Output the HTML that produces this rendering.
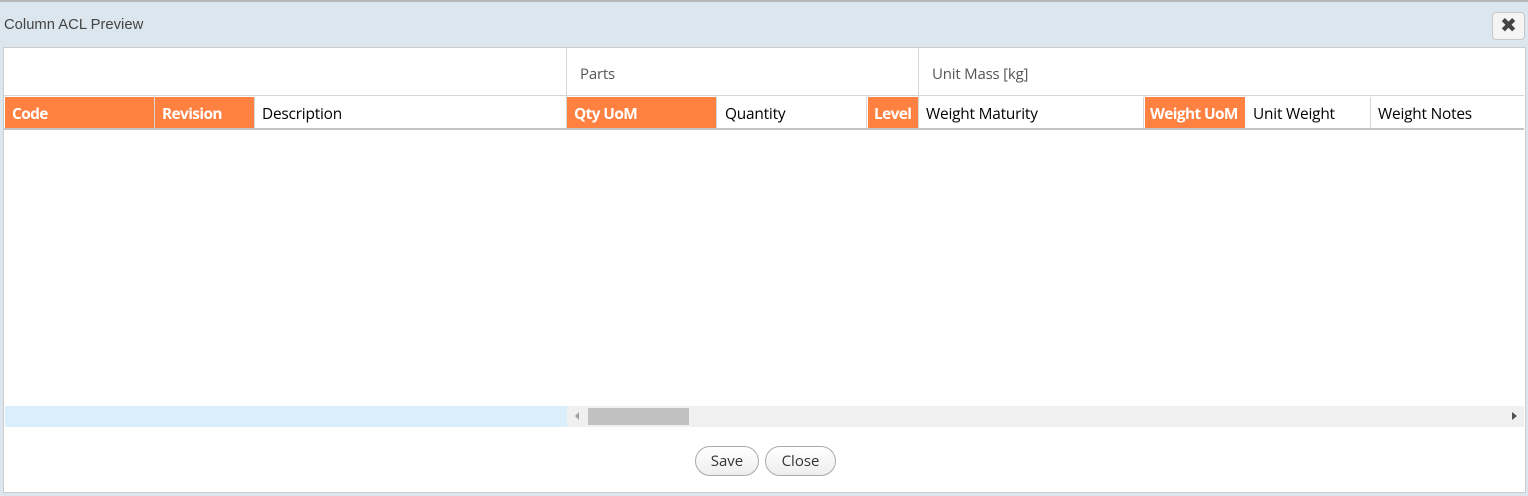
<!DOCTYPE html>
<html><head><style>
*{margin:0;padding:0;box-sizing:border-box}
body{width:1528px;height:496px;background:#dbe6ef;font-family:"Open Sans","DejaVu Sans","Liberation Sans",sans-serif;position:relative;overflow:hidden}
.a{position:absolute}
.top{left:0;top:0;width:1528px;height:2px;background:#b8b8b8}
.title{left:4px;top:17px;font-size:14.8px;color:#444;font-family:"Liberation Sans",sans-serif}
.xb{left:1492px;top:12px;width:33px;height:28px;background:#f4f4f4;border:1px solid #c8c8c8;border-radius:4px;text-align:center;font-size:20px;line-height:25px;font-weight:bold;color:#444;font-family:"DejaVu Sans",sans-serif}
.panel{left:3px;top:47px;width:1523px;height:446px;background:#fff;border:1px solid #ccc}
.c{top:97px;height:31px;font-size:15.4px;line-height:33px;padding-left:7px;color:#000;white-space:nowrap;letter-spacing:-0.2px}
.o{background:#ff8142;color:#fff;font-weight:bold;letter-spacing:-0.6px}
.vl{width:1px;background:#d6d6d6}
.g{top:64px;font-size:15px;color:#555;letter-spacing:-0.2px}
</style></head><body>
<div class="a top"></div>
<div class="a title">Column ACL Preview</div>
<div class="a xb">✖</div>
<div class="a panel"></div>
<div class="a" style="left:4px;top:95px;width:1520px;height:1px;background:#d6d6d6"></div>
<div class="a vl" style="left:566px;top:48px;height:80px"></div>
<div class="a vl" style="left:918px;top:48px;height:80px"></div>
<div class="a g" style="left:580px">Parts</div>
<div class="a g" style="left:932px">Unit Mass [kg]</div>
<div class="a c o" style="left:5px;width:149px">Code</div>
<div class="a c o" style="left:155px;width:99px">Revision</div>
<div class="a c" style="left:255px;width:311px">Description</div>
<div class="a c o" style="left:567px;width:149px">Qty UoM</div>
<div class="a vl" style="left:716px;top:97px;height:31px"></div>
<div class="a c" style="left:718px;width:148px">Quantity</div>
<div class="a vl" style="left:866px;top:97px;height:31px"></div>
<div class="a c o" style="left:868px;width:50px;padding-left:6px">Level</div>
<div class="a c" style="left:919px;width:225px">Weight Maturity</div>
<div class="a vl" style="left:1143px;top:97px;height:31px"></div>
<div class="a c o" style="left:1145px;width:100px;padding-left:5px">Weight UoM</div>
<div class="a c" style="left:1246px;width:124px">Unit Weight</div>
<div class="a vl" style="left:1370px;top:97px;height:31px"></div>
<div class="a c" style="left:1371px;width:150px">Weight Notes</div>
<div class="a vl" style="left:154px;top:97px;height:31px"></div>
<div class="a vl" style="left:254px;top:97px;height:31px"></div>
<div class="a" style="left:4px;top:128px;width:1520px;height:2px;background:#c4c4c4"></div>
<div class="a" style="left:5px;top:406px;width:562px;height:21px;background:#d9f0fc"></div>
<div class="a" style="left:567px;top:406px;width:957px;height:21px;background:#f0f0f0"></div>
<div class="a" style="left:588px;top:408px;width:101px;height:17px;background:#c1c1c1"></div>
<div class="a" style="left:575px;top:412px;width:0;height:0;border-top:4px solid transparent;border-bottom:4px solid transparent;border-right:4px solid #a0a0a0"></div>
<div class="a" style="left:1512px;top:412px;width:0;height:0;border-top:4px solid transparent;border-bottom:4px solid transparent;border-left:5px solid #505050"></div>
<div class="a" style="left:695px;top:446px;width:64px;height:30px;border:1px solid #aaa;border-radius:15px;background:linear-gradient(#fff,#eee);font-size:15px;line-height:28px;text-align:center;color:#333">Save</div>
<div class="a" style="left:765px;top:446px;width:71px;height:30px;border:1px solid #aaa;border-radius:15px;background:linear-gradient(#fff,#eee);font-size:15px;line-height:28px;text-align:center;color:#333">Close</div>
</body></html>
